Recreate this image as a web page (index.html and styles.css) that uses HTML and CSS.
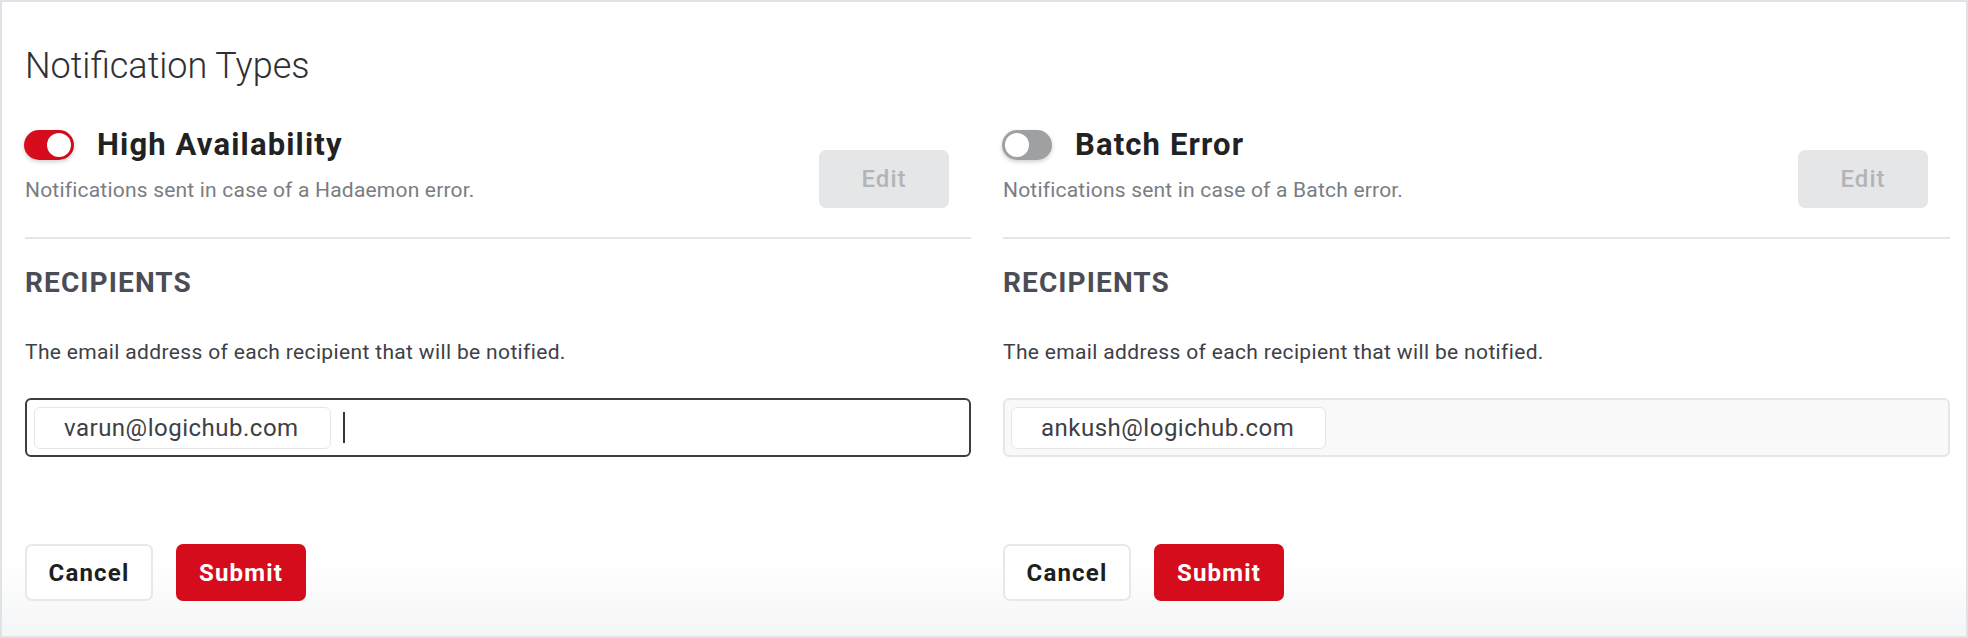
FILE: index.html
```html
<!DOCTYPE html>
<html lang="en">
<head>
<meta charset="utf-8">
<title>Notification Types</title>
<link rel="stylesheet" href="styles.css">
</head>
<body>
<main class="frame">
  <h1 class="page-title">Notification Types</h1>
  <div class="columns">
    <section class="notif">
      <div class="notif-head">
        <div class="notif-info">
          <div class="notif-title-row">
            <span class="toggle toggle-on"><span class="knob"></span></span>
            <h2 class="notif-title">High Availability</h2>
          </div>
          <p class="notif-desc">Notifications sent in case of a Hadaemon error.</p>
        </div>
        <button class="btn-edit" type="button" disabled>Edit</button>
      </div>
      <h3 class="section-label">RECIPIENTS</h3>
      <p class="section-help">The email address of each recipient that will be notified.</p>
      <div class="tag-input tag-input-active">
        <span class="chip">varun@logichub.com</span>
        <span class="caret"></span>
      </div>
      <div class="actions">
        <button class="btn btn-cancel" type="button">Cancel</button>
        <button class="btn btn-submit" type="button">Submit</button>
      </div>
    </section>
    <section class="notif">
      <div class="notif-head">
        <div class="notif-info">
          <div class="notif-title-row">
            <span class="toggle toggle-off"><span class="knob"></span></span>
            <h2 class="notif-title">Batch Error</h2>
          </div>
          <p class="notif-desc">Notifications sent in case of a Batch error.</p>
        </div>
        <button class="btn-edit" type="button" disabled>Edit</button>
      </div>
      <h3 class="section-label">RECIPIENTS</h3>
      <p class="section-help">The email address of each recipient that will be notified.</p>
      <div class="tag-input tag-input-idle">
        <span class="chip">ankush@logichub.com</span>
      </div>
      <div class="actions">
        <button class="btn btn-cancel" type="button">Cancel</button>
        <button class="btn btn-submit" type="button">Submit</button>
      </div>
    </section>
  </div>
</main>
</body>
</html>
```

FILE: styles.css
```css
* { box-sizing: border-box; }

html, body {
  margin: 0;
  padding: 0;
  background: #ffffff;
}

body {
  font-family: Roboto, "Liberation Sans", sans-serif;
  color: #3d4046;
}

.frame {
  width: 1968px;
  height: 638px;
  border: 2px solid #dfe2e6;
  padding: 42px 16px 0 23px;
  background: linear-gradient(to bottom, #ffffff 0%, #ffffff 88%, #f4f5f6 100%);
}

.page-title {
  margin: 0;
  font-size: 36px;
  line-height: 44px;
  font-weight: 300;
  color: #2e3034;
}

.columns {
  display: grid;
  grid-template-columns: 946px 947px;
  column-gap: 32px;
  margin-top: 42px;
}

.notif-head {
  display: flex;
  justify-content: space-between;
  align-items: flex-start;
  padding-bottom: 29px;
  border-bottom: 2px solid #e5e5e6;
}

.notif-title-row {
  display: flex;
  align-items: center;
  height: 30px;
}

.toggle {
  position: relative;
  width: 50px;
  height: 30px;
  border-radius: 15px;
  margin-left: -1px;
  flex: none;
  box-shadow: 0 2px 4px rgba(0, 0, 0, 0.18);
}

.toggle-on { background: linear-gradient(to right, #d80c1d, #cf0b1b); }
.toggle-off { background: #9fa0a1; }

.knob {
  position: absolute;
  top: 3px;
  width: 24px;
  height: 24px;
  border-radius: 50%;
  background: #ffffff;
}

.toggle-on .knob { right: 3px; }
.toggle-off .knob { left: 3px; }

.notif-title {
  margin: 0 0 0 23px;
  font-size: 31px;
  line-height: 30px;
  font-weight: 700;
  letter-spacing: 1.15px;
  color: #212224;
}

.notif-desc {
  margin: 17px 0 0;
  font-size: 21px;
  line-height: 26px;
  letter-spacing: 0.2px;
  color: #7a7d82;
}

.btn-edit {
  margin: 20px 22px 0 0;
  width: 130px;
  height: 58px;
  border: none;
  border-radius: 7px;
  background: #e5e6e8;
  color: #b2b4b7;
  font-family: inherit;
  font-size: 24px;
  font-weight: 500;
  letter-spacing: 1px;
}

.section-label {
  margin: 27px 0 0;
  font-size: 28px;
  line-height: 34px;
  font-weight: 700;
  letter-spacing: 1.1px;
  color: #4a4d55;
}

.section-help {
  margin: 39px 0 0;
  font-size: 21px;
  line-height: 26px;
  letter-spacing: 0.35px;
  color: #3d4046;
}

.tag-input {
  margin-top: 33px;
  height: 59px;
  border-radius: 6px;
  display: flex;
  align-items: center;
  gap: 12px;
  padding: 0 7px;
}

.tag-input-active { border: 2px solid #3a3d42; }
.tag-input-idle { border: 2px solid #e6e6e6; background: #f9f9f9; padding-left: 6px; }

.chip {
  height: 42px;
  display: inline-flex;
  align-items: center;
  padding: 0 31px 0 29px;
  border: 1px solid #e6e6e6;
  border-radius: 6px;
  background: #ffffff;
  font-size: 24px;
  letter-spacing: 0.5px;
  color: #3d4046;
}

.caret {
  width: 2px;
  height: 31px;
  background: #33363b;
}

.actions {
  display: flex;
  gap: 23px;
  margin-top: 87px;
}

.btn {
  height: 57px;
  border-radius: 7px;
  font-family: inherit;
  font-size: 24px;
  font-weight: 700;
  letter-spacing: 1.2px;
}

.btn-cancel {
  width: 128px;
  border: 2px solid #e8e8e9;
  background: #ffffff;
  color: #1e1f21;
}

.btn-submit {
  width: 130px;
  border: none;
  background: #d50c1c;
  color: #ffffff;
}
```
